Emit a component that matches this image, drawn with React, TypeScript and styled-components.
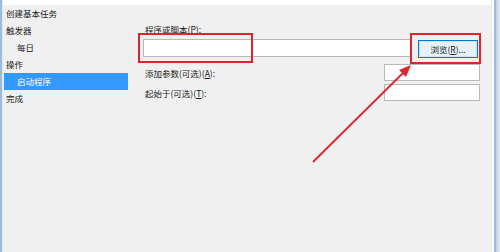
import React from 'react';
import styled, { createGlobalStyle } from 'styled-components';

const GlobalStyle = createGlobalStyle`
    html, body {
        margin: 0;
        padding: 0;
        background: #f0f0f0;
    }
    body {
        font-family: "Noto Sans CJK SC", "Noto Sans", sans-serif;
    }
`;

// Window frame
const Window = styled.div`
    position: relative;
    display: flex;
    width: 500px;
    height: 252px;
    overflow: hidden;
    background: #f0f0f0;
`;

const FrameLeft = styled.div`
    width: 2px;
    background: #9dbbdc;
    border-right: 1px solid #dfe9f4;
`;

const FrameRight = styled.div`
    width: 9px;
    display: flex;

    span:nth-child(1) { width: 1px; background: #f3e6e6; }
    span:nth-child(2) { width: 2px; background: #ffffff; }
    span:nth-child(3) { width: 2px; background: #9dbbdc; }
    span:nth-child(4) { width: 2px; background: #c7d4e2; }
    span:nth-child(5) { flex: 1; background: #e4e4e4; }
`;

const Content = styled.div`
    flex: 1;
    display: flex;
    flex-direction: column;
`;

const TopStrip = styled.div`
    height: 5px;
    background: #ffffff;
`;

const Body = styled.div`
    flex: 1;
    display: flex;
`;

// Left wizard step list
const Sidebar = styled.ul`
    width: 124px;
    margin: 0;
    padding: 0 0 0 1px;
    list-style: none;
`;

const Step = styled.li<{ indent?: boolean; active?: boolean }>`
    height: 17px;
    line-height: 17px;
    font-size: 8.5px;
    padding-left: ${p => (p.indent ? '13px' : '2px')};
    color: ${p => (p.active ? '#ffffff' : '#1a1a1a')};
    background: ${p => (p.active ? '#3399ff' : 'transparent')};
`;

// Right form
const Main = styled.div`
    flex: 1;
    padding: 18px 11px 0 15px;
    font-size: 8.5px;
    color: #1a1a1a;
`;

const Label = styled.div`
    height: 12px;
    line-height: 12px;
    padding-left: 2px;

    u {
        text-decoration: underline;
    }
`;

const ProgramRow = styled.div`
    display: flex;
    align-items: flex-start;
    gap: 6px;
    margin-top: 4px;
    margin-right: 2px;
`;

const TextBox = styled.div<{ width?: number }>`
    box-sizing: border-box;
    ${p => (p.width ? `width: ${p.width}px;` : 'flex: 1;')}
    height: ${p => (p.width ? 17 : 18)}px;
    background: #ffffff;
    border: 1px solid #b9b9b9;
`;

const BrowseButton = styled.button`
    box-sizing: border-box;
    width: 60px;
    height: 18px;
    margin-top: 1px;
    padding: 0;
    font-family: inherit;
    font-size: 8.5px;
    color: #1a1a1a;
    background: #e5f1fb;
    border: 1px solid #0078d7;
    box-shadow: inset 0 0 0 1px #cce4f7;
`;

const OptionRow = styled.div<{ gap: number }>`
    display: flex;
    justify-content: space-between;
    align-items: center;
    margin-top: ${p => p.gap}px;
`;

// Annotation overlays
const Highlight = styled.div<{ x: number; y: number; w: number; h: number }>`
    position: absolute;
    left: ${p => p.x}px;
    top: ${p => p.y}px;
    width: ${p => p.w}px;
    height: ${p => p.h}px;
    box-sizing: border-box;
    border: 2px solid #e2232f;
    pointer-events: none;
`;

const Overlay = styled.svg`
    position: absolute;
    left: 0;
    top: 0;
    pointer-events: none;
`;

const steps = [
    { label: '创建基本任务' },
    { label: '触发器' },
    { label: '每日', indent: true },
    { label: '操作' },
    { label: '启动程序', indent: true, active: true },
    { label: '完成' },
];

const App: React.FC = () => {
    return (
        <>
            <GlobalStyle />
            <Window>
                <FrameLeft />
                <Content>
                    <TopStrip />
                    <Body>
                        <Sidebar>
                            {steps.map(step => (
                                <Step key={step.label} indent={step.indent} active={step.active}>
                                    {step.label}
                                </Step>
                            ))}
                        </Sidebar>
                        <Main>
                            <Label>程序或脚本(<u>P</u>):</Label>
                            <ProgramRow>
                                <TextBox />
                                <BrowseButton>浏览(<u>R</u>)...</BrowseButton>
                            </ProgramRow>
                            <OptionRow gap={6}>
                                <Label>添加参数(可选)(<u>A</u>):</Label>
                                <TextBox width={96} />
                            </OptionRow>
                            <OptionRow gap={3}>
                                <Label>起始于(可选)(<u>T</u>):</Label>
                                <TextBox width={96} />
                            </OptionRow>
                        </Main>
                    </Body>
                </Content>
                <FrameRight>
                    <span />
                    <span />
                    <span />
                    <span />
                    <span />
                </FrameRight>

                <Highlight x={138} y={33} w={115} h={30} />
                <Highlight x={410} y={33} w={71} h={31} />
                <Overlay width={500} height={252}>
                    <line x1={313} y1={162} x2={404} y2={72} stroke="#e2232f" strokeWidth={1.8} />
                    <polygon points="411,65 406,77 399,70" fill="#e2232f" />
                </Overlay>
            </Window>
        </>
    );
};

export default App;
